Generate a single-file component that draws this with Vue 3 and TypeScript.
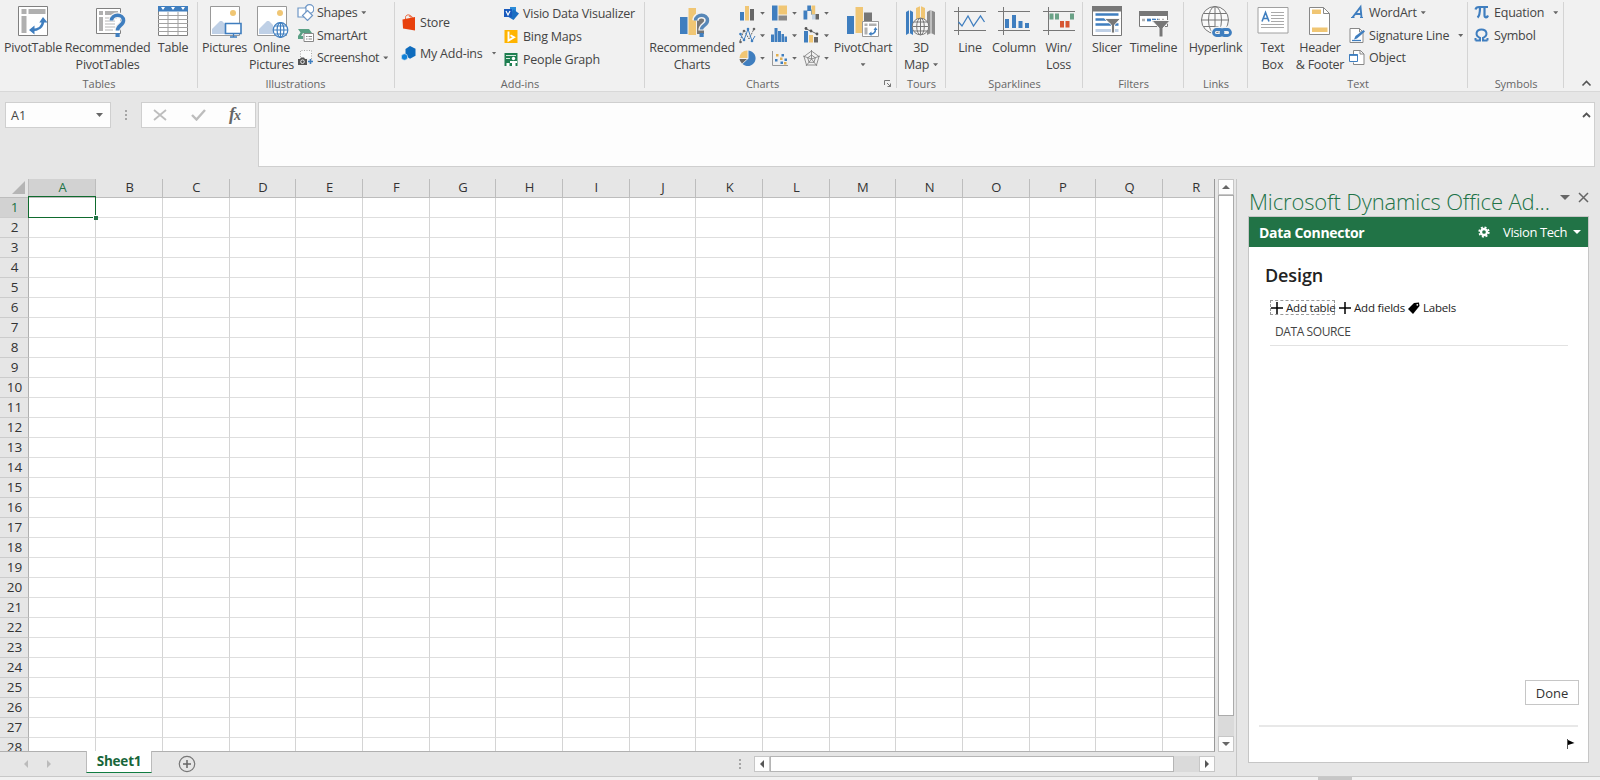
<script setup lang="ts">
interface BigButton { lines: string[]; icon: string; width: number; arrow?: boolean }
interface SmallButton { label: string; icon: string; arrow?: boolean; gap?: number }

const blue = '#3f7ebf'
const grey = '#777'
const sand = '#f0c674'

const big: Record<string, string> = {
  pivotTable: `<path d="M3.5 2.5h29v29h-29z" fill="#fff" stroke="#808080"/><path d="M6.5 5h5v5h-5zM13.5 5h17v5h-17zM6.5 12h5v17h-5z" fill="#b0b0b0"/><path d="M17 26c6 0 11-3 11-9" fill="none" stroke="${blue}" stroke-width="2.6"/><path d="M24.300 18.500 28 13l4.500 5.500zM19.500 21.500 14 26l5.500 4.500z" fill="${blue}"/>`,
  recPivot: `<path d="M6.500 4.500h24v25h-24z" fill="#fff" stroke="#808080"/><path d="M9 7h4v4H9zM15 7h13v4H15zM9 13h4v14H9z" fill="#b0b0b0"/><path d="M15 14h12M15 17h10M15 20h10M15 23h10M15 26h8" stroke="#b5b5b5"/><path d="M21.500 16.500c.3-7 12-7 12 0 0 5-6 4.500-6 10" fill="none" stroke="#f0f0f0" stroke-width="6"/><path d="M21.500 16.500c.3-7 12-7 12 0 0 5-6 4.500-6 10" fill="none" stroke="${blue}" stroke-width="3.600"/><path d="M25.500 29h4.200v4h-4.200z" fill="${blue}"/>`,
  table: `<path d="M3.500 2.500h29v29h-29z" fill="#fff" stroke="#808080"/><path d="M3 2h30v5.500H3z" fill="${blue}"/><path d="m6 3 2 3 2-3zM16 3l2 3 2-3zM26 3l2 3 2-3z" fill="#fff"/><path d="M3 11.500h30M3 15.500h30M3 19.500h30M3 23.500h30M3 27.500h30M13 8v23.500M23 8v23.500" stroke="#a2a2a2"/>`,
  pictures: `<path d="M3.500 2.500h29v29h-29z" fill="#fff" stroke="#999"/><circle cx="26" cy="9" r="3" fill="${sand}"/><path d="M5 30V25l8-8 2 0 4 4v9z" fill="#bfd0e6"/><path d="M18.500 19.500h15.500v10H18.500z" fill="#fff" stroke="${blue}" stroke-width="1.600"/><path d="M26.500 30v3M23 33h7" stroke="${blue}" stroke-width="1.300"/>`,
  online: `<path d="M3.500 2.500h29v29h-29z" fill="#fff" stroke="#999"/><circle cx="26" cy="9" r="3" fill="${sand}"/><path d="M5 30V25l8-8 2 0 4 4v9z" fill="#bfd0e6"/><g fill="none" stroke="${blue}" stroke-width="1.200"><circle cx="26.500" cy="26" r="7.300" fill="#fff"/><ellipse cx="26.500" cy="26" rx="3.400" ry="7.300"/><path d="M19 26h15M26.500 18.500v15M20.500 22h12M20.500 30h12"/></g>`,
  recCharts: `<path d="M6 13h7.500v17H6z" fill="${blue}"/><path d="M14.500 4H22v27h-7.500z" fill="${sand}"/><path d="M23 9h7v21h-7z" fill="#777"/><path d="M21.500 16.500c.3-7 12-7 12 0 0 5-6 4.500-6 10" fill="none" stroke="#f1f1f1" stroke-width="6.500"/><path d="M21.500 16.500c.3-7 12-7 12 0 0 5-6 4.500-6 9" fill="none" stroke="#5787b8" stroke-width="3.400"/><path d="M25.500 29h4.200v4h-4.200z" fill="${blue}"/>`,
  pivotChart: `<path d="M2 12h7v18H2z" fill="${blue}"/><path d="M10.500 3H18v26h-7.500z" fill="${sand}"/><path d="M19 8.500h8v10h-8z" fill="#777"/><path d="M17.500 17.500h16v15h-16z" fill="#fff" stroke="#999"/><path d="M19.500 19.500h3v2.500h-3zM24 19.500h7.500V22H24zM19.500 23.500h3v7h-3z" fill="#b0b0b0"/><path d="M25.500 30c4 0 5-2 5-5" fill="none" stroke="${blue}" stroke-width="1.500"/><path d="m28.500 26 2-3 2 3zM26.500 27.500l-3 2.500 3 2z" fill="${blue}"/>`,
  map: `<path d="m3 8 3.500-2L10 8v23l-3.500-2L3 31z" fill="${blue}"/><path d="m13 4 4.500-2L22 4v14h-9z" fill="${sand}"/><path d="m24 8 3.500-2L32 8v23l-4-2-4 2z" fill="#8c8c8c"/><path d="M6.500 6v23M17.500 2v14M28 6v23M11.200 8v18M22.800 8v18" stroke="#f1f1f1"/><g fill="none" stroke="#777"><circle cx="17.500" cy="22.500" r="8.300" fill="#f5f5f5"/><ellipse cx="17.500" cy="22.500" rx="3.800" ry="8.300"/><path d="M9.500 22.500h16M17.500 14.500v16M11 18h13M11 27h13"/></g>`,
  line: `<path d="M2 7.500h32M2 26.500h32M6.500 3v28" stroke="#777"/><path d="m6.500 18 3.500 4 6-10 5.500 10 7-10 4 6" fill="none" stroke="${blue}" stroke-width="1.300"/>`,
  column: `<path d="M2 7.500h32M2 26.500h32M7.500 3v28" stroke="#777"/><path d="M9 15h4v9H9zM16 11h4v13h-4zM22.500 17h4v7h-4zM29 19h4v5h-4z" fill="${blue}"/>`,
  winLoss: `<path d="M2 7.500h32M2 26.500h32M7.500 3v28" stroke="#777"/><path d="M8.500 9.500h4v6h-4zM14 9.500h4v6h-4zM29 9.500h4v6h-4z" fill="#6aa287"/><path d="M19 17h4v6.500h-4zM24.500 17h4v6.500h-4z" fill="#d65532"/>`,
  slicer: `<path d="M3.500 2.500h29v29h-29z" fill="#fff" stroke="#777"/><path d="M3 2h30v5.500H3z" fill="#777"/><path d="M6.500 10.500h23M6.500 15.500h23M6.500 20.500h23" stroke="${blue}" stroke-width="2.600"/><path d="M6.500 26.500h23" stroke="#bfd0e6" stroke-width="3"/><path d="M15.500 14.500h16l-6 6.500v8h-3v-8z" fill="#777" stroke="#f5f5f5"/>`,
  timeline: `<path d="M3.500 7.500h28v15h-28z" fill="#fff" stroke="#777"/><path d="M3 7h29v5H3z" fill="#777"/><path d="M6 16h22" stroke="#b0b0b0" stroke-width="2.500" stroke-dasharray="3 2"/><path d="M11 16h11" stroke="${blue}" stroke-width="2.500" stroke-dasharray="4 1"/><path d="M16 16.500h18l-7 7.500v9h-4v-9z" fill="#777" stroke="#f5f5f5"/>`,
  link: `<g fill="none" stroke="#777"><circle cx="17" cy="16" r="13.500" fill="#fafafa"/><ellipse cx="17" cy="16" rx="6.500" ry="13.500"/><path d="M3.500 16h27M17 2.500v27M5.500 9.500h23M5.500 22.500h15"/></g><g fill="none" stroke="#f1f1f1" stroke-width="5"><rect x="15.500" y="25" width="10" height="6.500" rx="3.200"/><rect x="23" y="25" width="10" height="6.500" rx="3.200"/></g><g fill="none" stroke="${blue}" stroke-width="2.800"><rect x="15.500" y="25.500" width="9.500" height="6" rx="3"/><rect x="23" y="25.500" width="9.500" height="6" rx="3"/></g>`,
  textBox: `<path d="M3 3.500h30V29H3z" fill="#fff" stroke="#a0a0a0"/><path d="M16 8.500h13M16 11.500h13M16 14.500h13M16 17.500h13M6 20.500h23M6 23.500h23" stroke="#aaa"/><path d="m7 17.500 3.500-9 3.500 9M8 14.500h5" fill="none" stroke="${blue}" stroke-width="1.600"/>`,
  header: `<path d="M7.500 3.500h14l6 6v21h-20z" fill="#fff" stroke="#888"/><path d="M21.500 3.500v6h6" fill="none" stroke="#888"/><path d="M10 5.500h9v4.500h-9zM10 23.500h15.500V28H10z" fill="${sand}"/>`,
}

const small: Record<string, string> = {
  shapes: `<g fill="#fff" stroke="#6f97c6" stroke-width="1.200"><circle cx="12.500" cy="5" r="4.300"/><path d="M1 4h8v9H1z"/><path d="m10.500 6.500 5 5-5 5-5-5z"/></g>`,
  smartArt: `<path d="M1 2h11l3 4H6l-2 3H1l2.500-3.500z" fill="#5aa084"/><path d="M1 9h5v3H1z" fill="#5aa084"/><path d="M7 6.500h9.500v8H7z" fill="#fff" stroke="#888"/><path d="M9 9.500h1.500m1 0h3.500M9 12h1.500m1 0h3.500" stroke="#888"/>`,
  screenshot: `<path d="M3.500 8V1.500h11V10" fill="#fafafa" stroke="#aaa" stroke-dasharray="1 1.500"/><path d="M1 10h2l1-1.500h3l1 1.500h2V16H1z" fill="#555"/><circle cx="5.500" cy="12.700" r="1.800" fill="none" stroke="#eee"/><path d="M11 12.500h5M13.500 10v5" stroke="${blue}" stroke-width="1.600"/>`,
  store: `<path d="M2.500 5.500 15 3v13.500L3 14.500z" fill="#e8400c"/><path d="M5.500 5V3.500C5.500 0 11 0 11 3.500V5M9 3c1-2 3-1 3.500 1" fill="none" stroke="#e8400c" stroke-width=".8"/>`,
  addins: `<path d="m10 1 5.500 2.800v7l-5.500 3-4.500-3V4z" fill="#0f6cbd"/><circle cx="4.500" cy="12" r="3.200" fill="#1081d8" stroke="#f1f1f1" stroke-width=".6"/>`,
  visio: `<path d="M7 2h6v5H7z" fill="#2b8bd8"/><path d="m10.500 4.500 5.500 4-5.500 6.500-5-3z" fill="#1b6ec2"/><path d="M1 4h8v8H1z" fill="#185abd"/><path d="m3 6 2 4 2-4" fill="none" stroke="#fff" stroke-width="1.200"/>`,
  bing: `<path d="M1.500 2h13v13h-13z" fill="#ffb400"/><path d="M5.500 3.500v9l5.500-3.200-3.500-2" fill="none" stroke="#fff" stroke-width="1.900"/>`,
  people: `<path d="M1.500 2h13v13h-13z" fill="#1e7e50"/><path d="M3 4.500h10M3 7.500h4" stroke="#d6eadf" stroke-width="1.200"/><circle cx="10.500" cy="7.500" r="1.700" fill="#fff"/><path d="M7 10h7v2h-1.500v3H9v-3H7zM3.500 12h3v3h-3z" fill="#fff"/>`,
  wordArt: `<path d="M3.500 13.500 11.500 3l1 10.500M6 10h6.500" fill="none" stroke="${blue}" stroke-width="1.900"/><path d="M2 13.500h3.500M11 13.500h3" stroke="${blue}"/>`,
  signature: `<path d="M1 1.500h9.500L14 5v10.500H1z" fill="#fff" stroke="#888"/><path d="M10.500 1.500V5H14" fill="none" stroke="#888"/><path d="M3 13.500h9" stroke="#3f7ebf" stroke-width="1.300"/><path d="m5 12.500 1.500-3.500L14.500 3 16 4.500 8 11.500z" fill="${blue}"/>`,
  object: `<path d="M4.500 7V1.500h7L15 5v10.500H4.500v-2" fill="#fff" stroke="#888"/><path d="M11 1.500V5h4" fill="none" stroke="#888"/><path d="M.500 5.500h8v7h-8z" fill="#fff" stroke="${blue}"/><path d="M.500 6h8" stroke="${blue}" stroke-width="1.800"/>`,
  equation: `<path d="M1.500 5.500C2 3 3.500 3 5 3h9M6 3.500C6 8 5.500 12 3.500 13.500M10.500 3.500v7.500c0 3 2.500 3 3.500.5" fill="none" stroke="${blue}" stroke-width="2.200"/>`,
  symbol: `<path d="M1.500 13.500H6V11C.500 8.500 2 2.500 7.500 2.500s7 6 1.500 8.500v2.500h4.500M1.500 11v2.500M13.500 11v2.500" fill="none" stroke="${blue}" stroke-width="2"/>`,
}

const mini: string[] = [
  `<path d="M1 7h4v8.500H1z" fill="${blue}"/><path d="M6 1h4v14.500H6z" fill="${sand}"/><path d="M11 4h4v11.500h-4z" fill="#666"/>`,
  `<path d="M1 .500h5.500v15H1z" fill="${blue}"/><path d="M7.500.500H16v9H7.500z" fill="${sand}"/><path d="M7.500 10.500H16v5H7.500z" fill="#888"/>`,
  `<path d="M.500 5.500h3.800v9H.500zM4.300.500H8V6H4.300zM8 4.500h1v5H8z" fill="${blue}"/><path d="M8.500.500h3.700v9H8.500z" fill="${sand}"/><path d="M12.500 9H16v5.500h-3.500z" fill="#666"/><path d="M9 9h3.500v5.500H9z" fill="${blue}" opacity=".25"/>`,
  `<path d="m1 14 4-11 5 9 5-10" fill="none" stroke="#666" stroke-dasharray="2 1"/><path d="m1 7 4 6 4-11 4 12 3-5" fill="none" stroke="${blue}"/><g fill="${blue}"><circle cx="1.500" cy="7" r="1.300"/><circle cx="5" cy="13" r="1.300"/><circle cx="9" cy="2" r="1.300"/><circle cx="13" cy="14" r="1.300"/></g><g fill="#666"><circle cx="1.500" cy="15" r="1.300"/><circle cx="5" cy="4" r="1.300"/><circle cx="15" cy="2" r="1.300"/></g>`,
  `<path d="M0 7.500h3V15H0zM3.500 1h3v14h-3zM7 4h3v11H7zM10.500 7h2.500v8h-2.500zM13.500 9.500H16V15h-2.500z" fill="${blue}"/>`,
  `<path d="M1 4h4v11.500H1z" fill="${blue}"/><path d="M6 8h4v7.500H6z" fill="${sand}"/><path d="M11 10h4v5.500h-4z" fill="#666"/><path d="m2 1.500 6 2.500 6 3" fill="none" stroke="#666"/><circle cx="3" cy="1.500" r="1.400" fill="#555"/><circle cx="8" cy="4" r="1.400" fill="#555"/><circle cx="14" cy="7" r="1.400" fill="#555"/>`,
  `<path d="M9.500.500a7.800 7.800 0 1 1-6 13.500l6-5.500z" fill="${blue}"/><path d="M8.500.500V8H.500A7.500 7.500 0 0 1 8.500.500z" fill="${sand}"/><path d="M.500 9H8l-5 4.500A7 7 0 0 1 .500 9z" fill="#666"/>`,
  `<path d="M1.500 1v14.500H17" fill="none" stroke="#999"/><path d="M4 9h2.500v2.500H4zM10.500 4H13v2.500h-2.500zM9.500 11.500H12V14H9.500zM13.500 8.500H16V11h-2.500z" fill="${blue}"/><path d="M5 4h2.500v2.500H5zM9 7.500h2.500V10H9zM13 12h2.500v2.500H13z" fill="#e2b050"/>`,
  `<path d="M8.500 1 16 6.500 13.500 15h-10L1 6.500zM8.500 5l3.800 2.800L11 12.300H6L4.700 7.800zM8.500 0v9M17 6 8.500 9l5.500 7M0 6l8.500 3L3 16" fill="none" stroke="${grey}" stroke-width=".8"/>`,
]

const tables: BigButton[] = [
  { lines: ['PivotTable'], icon: 'pivotTable', width: 66 },
  { lines: ['Recommended', 'PivotTables'], icon: 'recPivot', width: 83 },
  { lines: ['Table'], icon: 'table', width: 48 },
]
const illustrations: BigButton[] = [
  { lines: ['Pictures'], icon: 'pictures', width: 53 },
  { lines: ['Online', 'Pictures'], icon: 'online', width: 41 },
]
const shapes: SmallButton[] = [
  { label: 'Shapes', icon: 'shapes', arrow: true },
  { label: 'SmartArt', icon: 'smartArt' },
  { label: 'Screenshot', icon: 'screenshot', arrow: true },
]
const store: SmallButton[] = [
  { label: 'Store', icon: 'store' },
  { label: 'My Add-ins', icon: 'addins', arrow: true, gap: 8 },
]
const addins: SmallButton[] = [
  { label: 'Visio Data Visualizer', icon: 'visio' },
  { label: 'Bing Maps', icon: 'bing' },
  { label: 'People Graph', icon: 'people' },
]
const sparklines: BigButton[] = [
  { lines: ['Line'], icon: 'line', width: 44 },
  { lines: ['Column'], icon: 'column', width: 44 },
  { lines: ['Win/', 'Loss'], icon: 'winLoss', width: 45 },
]
const filters: BigButton[] = [
  { lines: ['Slicer'], icon: 'slicer', width: 40 },
  { lines: ['Timeline'], icon: 'timeline', width: 53 },
]
const textBig: BigButton[] = [
  { lines: ['Text', 'Box'], icon: 'textBox', width: 45 },
  { lines: ['Header', '& Footer'], icon: 'header', width: 50 },
]
const textSmall: SmallButton[] = [
  { label: 'WordArt', icon: 'wordArt', arrow: true },
  { label: 'Signature Line', icon: 'signature', arrow: true, gap: 8 },
  { label: 'Object', icon: 'object' },
]
const symbols: SmallButton[] = [
  { label: 'Equation', icon: 'equation', arrow: true, gap: 8 },
  { label: 'Symbol', icon: 'symbol' },
]

interface Group {
  key: string
  title: string
  width: number
  pad: number
  big?: BigButton[]
  cols?: { items: SmallButton[]; cls: string }[]
}
const groups: Group[] = [
  { key: 'tables', title: 'Tables', width: 198, pad: 0, big: tables },
  { key: 'illustrations', title: 'Illustrations', width: 197, pad: 0, big: illustrations, cols: [{ items: shapes, cls: 'c-shapes' }] },
  { key: 'addins', title: 'Add-ins', width: 250, pad: 5, cols: [{ items: store, cls: 'c-store' }, { items: addins, cls: 'c-addins' }] },
  { key: 'charts', title: 'Charts', width: 252, pad: 5 },
  { key: 'tours', title: 'Tours', width: 49, pad: 0, big: [{ lines: ['3D', 'Map'], icon: 'map', width: 48, arrow: true }] },
  { key: 'spark', title: 'Sparklines', width: 137, pad: 2, big: sparklines },
  { key: 'filters', title: 'Filters', width: 101, pad: 4, big: filters },
  { key: 'links', title: 'Links', width: 64, pad: 0, big: [{ lines: ['Hyperlink'], icon: 'link', width: 63 }] },
  { key: 'text', title: 'Text', width: 220, pad: 2, big: textBig, cols: [{ items: textSmall, cls: 'c-text' }] },
  { key: 'symbols', title: 'Symbols', width: 96, pad: 6, cols: [{ items: symbols, cls: 'c-symbols' }] },
]

const columns = 'ABCDEFGHIJKLMNOPQR'.split('')
const rows = Array.from({ length: 28 }, (_, i) => i + 1)
</script>

<template>
  <div class="app">
    <div class="ribbon">
      <section v-for="g in groups" :key="g.key" class="group" :style="{ width: g.width + 'px' }">
        <div class="content" :style="{ paddingLeft: g.pad + 'px' }">
          <template v-if="g.key === 'charts'">
            <div class="big b-rec">
              <svg class="bi" viewBox="0 0 36 34" v-html="big.recCharts" />
              <span>Recommended</span><span>Charts</span>
            </div>
            <div class="minis">
              <div v-for="(m, i) in mini" :key="i" class="mini">
                <svg width="17" height="17" viewBox="0 0 17 17" v-html="m" /><i class="arrow" />
              </div>
            </div>
            <div class="big b-pivot">
              <svg class="bi" viewBox="0 0 36 34" v-html="big.pivotChart" />
              <span>PivotChart</span><span><i class="arrow" /></span>
            </div>
          </template>
          <div v-for="b in g.big" :key="b.icon" class="big" :style="{ width: b.width + 'px' }">
            <svg class="bi" viewBox="0 0 36 34" v-html="big[b.icon]" />
            <span v-for="(l, i) in b.lines" :key="l">{{ l }}<i v-if="b.arrow && i === 1" class="arrow" /></span>
          </div>
          <div v-for="c in g.cols" :key="c.cls" class="col" :class="c.cls">
            <div v-for="s in c.items" :key="s.label" class="small">
              <svg width="17" height="17" viewBox="0 0 17 17" v-html="small[s.icon]" />
              <span>{{ s.label }}</span>
              <i v-if="s.arrow" class="arrow" :class="{ far: s.gap }" />
            </div>
          </div>
        </div>
        <footer class="gtitle" :class="'t-' + g.key">{{ g.title }}</footer>
        <svg v-if="g.key === 'charts'" class="launcher" width="8" height="8" viewBox="0 0 8 8"><path d="M.5 5V.5H6M3 3l3.500 3.500M6.500 3.500v3h-3" fill="none" stroke="#777" /></svg>
      </section>
      <svg class="collapse" width="11" height="7" viewBox="0 0 11 7"><path d="m1.500 5.500 4-4 4 4" fill="none" stroke="#555" stroke-width="1.600" /></svg>
    </div>

    <div class="formula">
      <div class="namebox"><span>A1</span><i class="arrow" /></div>
      <div class="dots"><b /><b /><b /></div>
      <div class="fxbox">
        <svg width="14" height="12" viewBox="0 0 14 12"><path d="m1 1 12 10M13 1 1 11" stroke="#bdbdbd" stroke-width="1.800" /></svg>
        <svg width="15" height="12" viewBox="0 0 15 12"><path d="m1 6 4.500 4.500L14 1" fill="none" stroke="#bdbdbd" stroke-width="2.400" /></svg>
        <span class="fx">f<small>x</small></span>
      </div>
      <div class="input"><svg width="9" height="6" viewBox="0 0 9 6"><path d="m1 5 3.500-3.500L8 5" fill="none" stroke="#555" stroke-width="1.800" /></svg></div>
    </div>

    <div class="work">
      <div class="book">
        <div class="gridrow">
          <div class="sheet">
            <div class="heads">
              <div class="corner"><svg width="13" height="13" viewBox="0 0 13 13"><path d="M13 0v13H0z" fill="#b5b5b5" /></svg></div>
              <div v-for="c in columns" :key="c" class="head" :class="{ on: c === 'A' }">{{ c }}</div>
            </div>
            <div v-for="r in rows" :key="r" class="row">
              <div class="num" :class="{ on: r === 1 }">{{ r }}</div>
              <div v-for="c in columns" :key="c" class="cell" />
            </div>
            <div class="selection"><b /></div>
          </div>
          <div class="vscroll">
            <div class="sbtn"><i class="tri up" /></div>
            <div class="vthumb" />
            <div class="track" />
            <div class="sbtn"><i class="tri down" /></div>
          </div>
        </div>
        <div class="tabs">
          <i class="tri left dim" /><i class="tri right dim" />
          <div class="tab">Sheet1</div>
          <svg class="plus" width="18" height="18" viewBox="0 0 18 18"><circle cx="9" cy="9" r="7.700" fill="none" stroke="#777" stroke-width="1.200" /><path d="M9 5v8M5 9h8" stroke="#666" stroke-width="1.500" /></svg>
          <div class="dots tabdots"><b /><b /><b /></div>
          <div class="hscroll">
            <div class="sbtn"><i class="tri left" /></div>
            <div class="hthumb" />
            <div class="track" />
            <div class="sbtn"><i class="tri right" /></div>
          </div>
        </div>
      </div>

      <aside class="pane">
        <div class="ptitle">
          <h1>Microsoft Dynamics Office Ad...</h1>
          <i class="tri down" />
          <svg width="11" height="11" viewBox="0 0 11 11"><path d="m1 1 9 9M10 1l-9 9" stroke="#666" stroke-width="1.500" /></svg>
        </div>
        <div class="panel">
          <div class="bar">
            <strong>Data Connector</strong>
            <svg width="12" height="12" viewBox="0 0 12 12"><circle cx="6" cy="6" r="4.800" fill="none" stroke="#fff" stroke-width="1.700" stroke-dasharray="2 1.770" /><circle cx="6" cy="6" r="3" fill="none" stroke="#fff" stroke-width="2.300" /></svg>
            <span>Vision Tech</span><i class="tri" />
          </div>
          <h2>Design</h2>
          <div class="actions">
            <span class="act focus"><svg width="12" height="12" viewBox="0 0 12 12"><path d="M6 0v12M0 6h12" stroke="#000" stroke-width="1.500" /></svg><em>Add table</em></span>
            <span class="act a2"><svg width="12" height="12" viewBox="0 0 12 12"><path d="M6 0v12M0 6h12" stroke="#000" stroke-width="1.500" /></svg><em>Add fields</em></span>
            <span class="act a3"><svg width="12" height="12" viewBox="0 0 12 12"><path d="M6 1 11 .500 11.500 4 5 12 0 7z" /><circle cx="9.300" cy="2.800" r=".9" fill="#fff" /></svg><em>Labels</em></span>
          </div>
          <div class="source">DATA SOURCE</div>
          <div class="fill" />
          <div class="done">Done</div>
          <div class="flag"><svg width="8" height="10" viewBox="0 0 8 10"><path d="M.5 0v10" stroke="#555" /><path d="m1 1 6.500 3L1 6z" /></svg></div>
        </div>
      </aside>
    </div>
    <div class="status"><b /></div>
  </div>
</template>

<style>
body { margin: 0; overflow: hidden; }
</style>

<style scoped>
* { box-sizing: border-box; }
.app { width: 1600px; height: 780px; display: flex; flex-direction: column; overflow: hidden; background: #e6e6e6; font-family: "Open Sans", "Noto Sans", sans-serif; color: #444; font-size: 12.500px; }
svg { display: block; flex: none; }
.ribbon { height: 92px; flex: none; display: flex; background: #f1f1f1; border-bottom: 1px solid #d8d8d8; position: relative; }
.group { height: 88px; flex: none; position: relative; display: flex; flex-direction: column; }
.group::after { content: ""; position: absolute; right: 0; top: 2px; bottom: 0; width: 1px; background: #d4d4d4; }
.content { height: 76px; display: flex; flex: none; }
.big { display: flex; flex-direction: column; align-items: center; padding-top: 4px; flex: none; line-height: 16.500px; white-space: nowrap; letter-spacing: -.25px; }
.big .bi { width: 36px; height: 34px; margin-bottom: 2px; }
.big span { display: flex; align-items: center; height: 16.500px; }
.arrow { width: 5px; height: 3px; background: #666; clip-path: polygon(0 0, 100% 0, 50% 100%); flex: none; }
.big .arrow { margin-left: 4px; }
.b-rec { width: 84px; }
.b-pivot { width: 62px; margin-left: -3px; }
.b-pivot .arrow { margin: 0; }
.minis { display: grid; grid-template-columns: repeat(3, 32px); grid-auto-rows: 22.500px; padding: 2px 0 0 5px; }
.mini { display: flex; align-items: center; gap: 4px; }
.col { display: flex; flex-direction: column; padding-top: 1.500px; }
.small { display: flex; align-items: center; height: 22.600px; white-space: nowrap; letter-spacing: -.22px; }
.small svg { margin-right: 3px; }
.small .arrow { margin-left: 4px; }
.small .arrow.far { margin-left: 9px; }
.c-shapes { padding-left: 5px; }
.c-shapes .small { letter-spacing: -.3px; }
.c-store { padding-top: 6.500px; width: 103px; }
.c-store .small { height: 31px; }
.c-addins .small { height: 23.400px; }
.c-text { padding-left: 4px; }
.gtitle { font-size: 11px; line-height: 16px; text-align: center; color: #666; letter-spacing: -.05px; }
.t-charts { padding-right: 17px; }
.t-illustrations { padding-right: 2px; }
.launcher { position: absolute; right: 5px; top: 80px; }
.collapse { position: absolute; right: 8px; top: 80px; }

.formula { height: 87px; flex: none; display: flex; padding: 10px 5px 0 5px; align-items: flex-start; }
.namebox, .fxbox { height: 26px; background: #fdfdfd; border: 1px solid #cfcfcf; display: flex; align-items: center; }
.namebox { width: 106px; padding: 0 7px 0 5px; justify-content: space-between; font-size: 12.500px; }
.namebox .arrow { width: 7px; height: 4px; }
.dots { width: 30px; height: 26px; display: flex; flex-direction: column; align-items: center; justify-content: center; gap: 2px; }
.dots b { width: 2px; height: 2px; background: #a6a6a6; }
.fxbox { width: 115px; padding-left: 11px; gap: 24px; }
.fx { font: italic bold 18px/20px "Liberation Serif", serif; color: #666; letter-spacing: -1px; margin-left: -1px; }
.fx small { font-size: 14px; }
.input { height: 65px; flex: 1; margin-left: 2px; background: #fdfdfd; border: 1px solid #cfcfcf; display: flex; justify-content: flex-end; padding: 9px 3px 0 0; }

.work { height: 597px; display: flex; flex: none; }
.book { width: 1237px; height: 597px; flex: none; border-right: 1px solid #c6c6c6; }
.gridrow { height: 573px; display: flex; }
.sheet { width: 1215px; height: 573px; overflow: hidden; position: relative; border-right: 1px solid #999; border-bottom: 1px solid #b0b0b0; flex: none; }
.heads { display: flex; height: 19px; width: 1240px; border-bottom: 1px solid #bdbdbd; background: #e6e6e6; }
.corner { width: 29px; flex: none; display: flex; justify-content: flex-end; align-items: flex-end; padding: 0 3px 3px 0; border-right: 1px solid #bdbdbd; }
.head { width: 66.667px; flex: none; text-align: center; line-height: 16px; font-size: 13px; border-right: 1px solid #bdbdbd; color: #333; padding-left: 1px; }
.corner + .head, .num + .cell { width: 67.400px; }
.head.on, .num.on { background: #d2d2d2; color: #217346; }
.row { display: flex; height: 20px; width: 1240px; background: #fff; }
.num { width: 29px; flex: none; text-align: center; line-height: 19px; font-size: 13.500px; background: #e6e6e6; border-right: 1px solid #b0b0b0; border-bottom: 1px solid #ccc; color: #333; padding-left: 1px; }
.cell { width: 66.667px; flex: none; border-right: 1px solid #d4d4d4; border-bottom: 1px solid #dedede; }
.selection { position: absolute; left: 28px; top: 17px; width: 68px; height: 22px; border: 1px solid #0f6b2e; outline: .500px solid #0f6b2e; outline-offset: -1.500px; }
.selection b { position: absolute; right: -3px; bottom: -3px; width: 5px; height: 5px; background: #217346; border: 1px solid #fff; border-width: 1px 0 0 1px; }
.vscroll { width: 16px; margin-left: 2.500px; display: flex; flex-direction: column; padding-top: 0; }
.sbtn { width: 16px; height: 16px; flex: none; background: #fdfdfd; border: 1px solid #c6c6c6; display: flex; align-items: center; justify-content: center; }
.vthumb { height: 521px; background: #fff; border: 1px solid #ababab; }
.track { flex: 1; background: #dadada; }
.tri { width: 0; height: 0; border: 4px solid transparent; border-top: 4px solid #666; border-bottom: 0; flex: none; }
.tri.up { border-top: 0; border-bottom: 4px solid #666; }
.tri.left { border: 4px solid transparent; border-right: 4px solid #555; border-left: 0; }
.tri.right { border: 4px solid transparent; border-left: 4px solid #555; border-right: 0; }
.tri.left.dim { border-right-color: #bbb; margin-left: 24px; }
.tri.right.dim { border-left-color: #bbb; margin-left: 19px; }
.tabs { height: 24px; display: flex; align-items: center; }
.tab { width: 66px; height: 22px; margin: -1px 0 0 35px; align-self: flex-start; background: #fff; border: 1px solid #bbb; border-top: 0; border-bottom: 1.500px solid #107c41; color: #17663a; font-weight: 700; font-size: 13.500px; line-height: 20px; text-align: center; letter-spacing: -.2px; position: relative; }
.plus { margin-left: 26px; }
.tabdots { width: 8px; margin-left: 540px; }
.hscroll { margin-left: 10px; width: 461px; display: flex; }
.hthumb { width: 404px; background: #fff; border: 1px solid #b5b5b5; }

.pane { flex: 1; padding: 0 13px 0 11px; }
.ptitle { display: flex; height: 37px; }
h1 { margin: 0; font-size: 22px; font-weight: 300; line-height: 45px; color: #217346; width: 312px; white-space: nowrap; letter-spacing: -.14px; padding-left: 1px; }
.ptitle .tri { border-width: 5px 5px 0; margin-top: 16px; }
.ptitle svg { margin: 13px 0 0 8px; }
.panel { height: 546.500px; background: #fff; border: 1px solid #c6c6c6; display: flex; flex-direction: column; }
.bar { height: 30px; flex: none; background: #217346; color: #fff; display: flex; align-items: center; padding: 0 7px 0 10px; font-size: 13px; }
.bar strong { font-size: 14px; letter-spacing: -.3px; flex: 1; }
.bar span { margin-left: 13px; letter-spacing: -.4px; }
.bar .tri { border-top-color: #fff; margin-left: 6px; }
h2 { margin: 15px 0 0 16px; font-size: 18px; font-weight: 600; line-height: 26px; color: #222; letter-spacing: -.1px; }
.actions { display: flex; margin: 12px 0 0 21px; height: 15px; }
.act { display: flex; align-items: center; white-space: nowrap; border: 1px solid transparent; }
.act em { font-style: normal; font-size: 11.500px; color: #222; margin-left: 3px; letter-spacing: -.2px; }
.focus { border: 1px dashed #999; width: 65px; }
.a2 { margin-left: 3px; width: 69px; }
.source { margin: 5px 20px 0 21px; padding-left: 5px; height: 26px; line-height: 24px; border-bottom: 1px solid #e2e2e2; font-size: 12px; letter-spacing: -.4px; }
.fill { flex: 1; }
.done { align-self: flex-end; width: 54px; height: 25px; margin-right: 9px; border: 1px solid #c6c6c6; text-align: center; line-height: 24px; color: #333; font-size: 13px; }
.flag { margin: 20px 10px 0; height: 37px; border-top: 2px solid #e8e8e8; display: flex; justify-content: flex-end; padding: 12px 3px 0 0; }
.status { height: 4px; background: #f1f1f1; border-top: 1px solid #c8c8c8; flex: none; display: flex; }
.status b { width: 34px; margin-left: 1318px; background: #c6c6c6; }
</style>
